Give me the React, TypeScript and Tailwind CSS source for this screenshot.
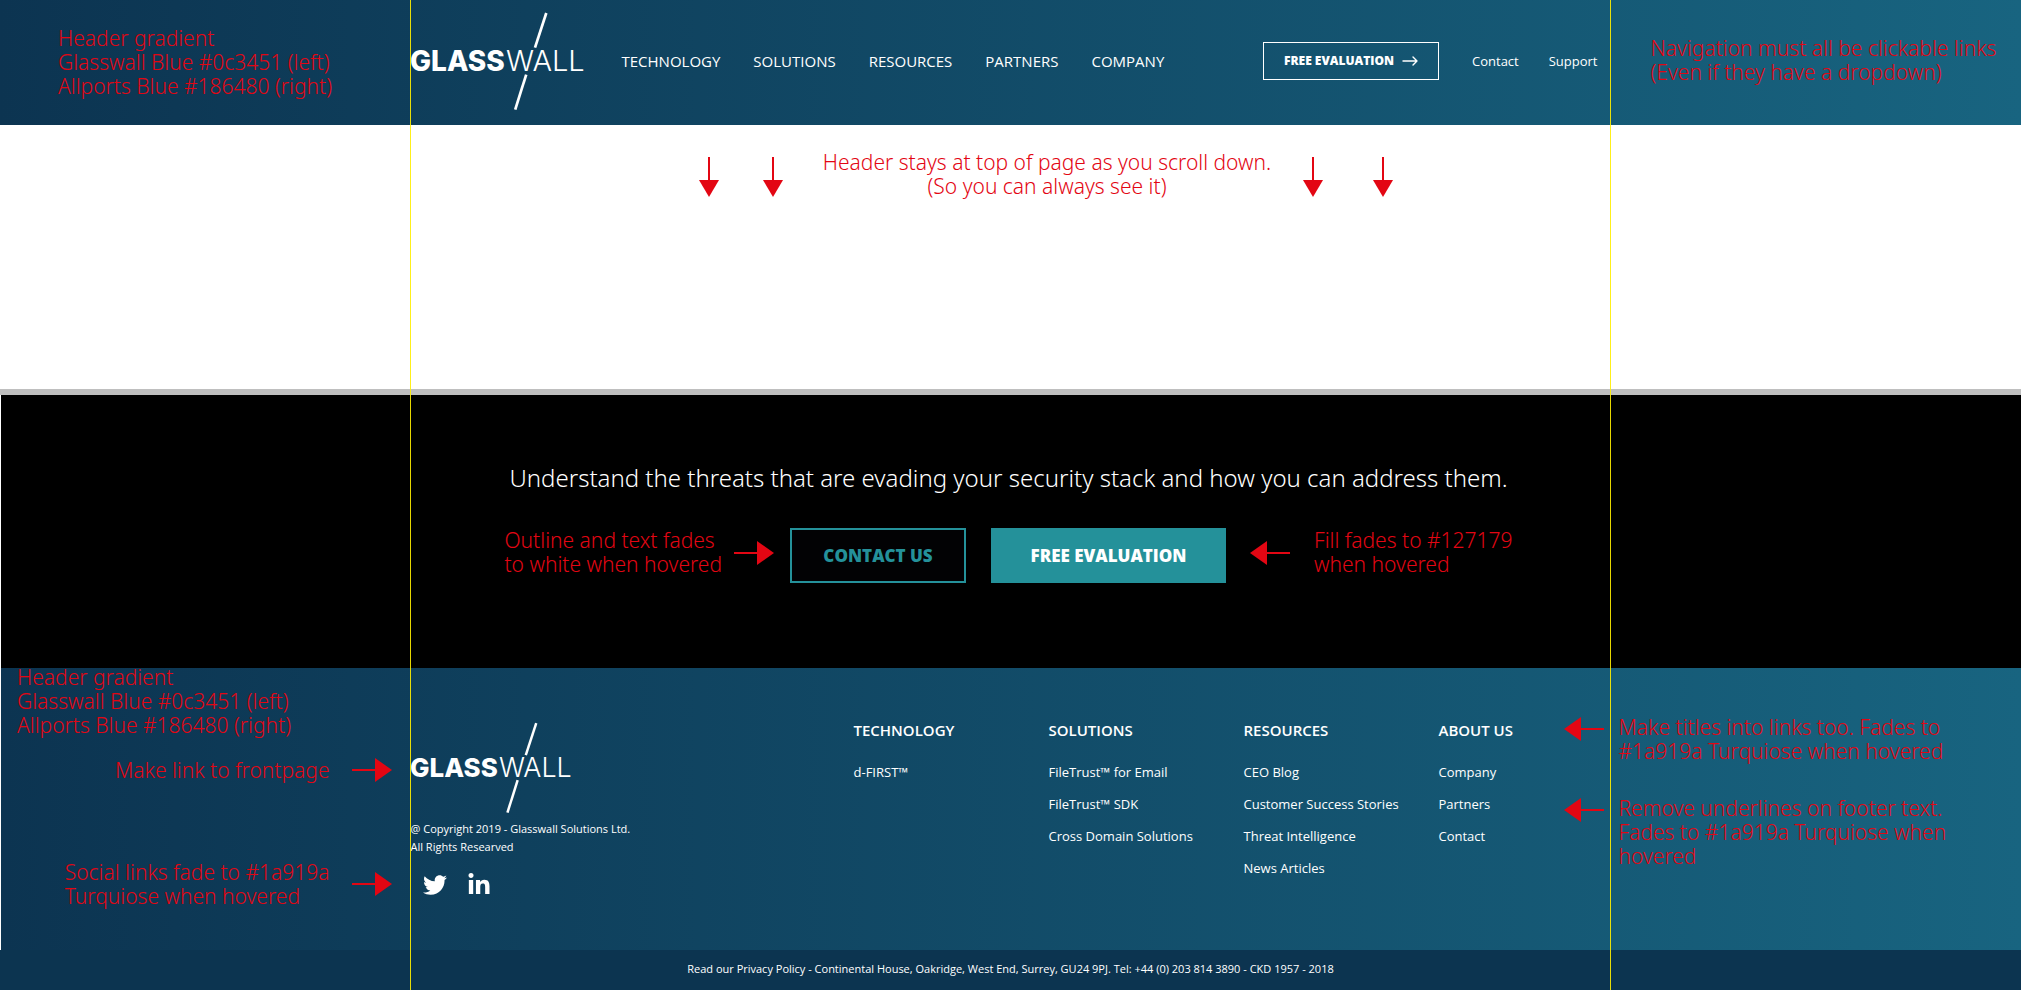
import React from "react";
import { FaLinkedinIn, FaTwitter } from "react-icons/fa";

const navLinks = ["TECHNOLOGY", "SOLUTIONS", "RESOURCES", "PARTNERS", "COMPANY"];

const footerColumns = [
  { title: "TECHNOLOGY", links: ["d-FIRST™"] },
  { title: "SOLUTIONS", links: ["FileTrust™ for Email", "FileTrust™ SDK", "Cross Domain Solutions"] },
  { title: "RESOURCES", links: ["CEO Blog", "Customer Success Stories", "Threat Intelligence", "News Articles"] },
  { title: "ABOUT US", links: ["Company", "Partners", "Contact"] },
];

function Logo({ className }: { className: string }) {
  return (
    <svg viewBox="0 0 175 99" className={className} role="img" aria-label="Glasswall">
      <g stroke="#fff" strokeWidth="2.7">
        <path d="M135.3 1 124 35.7" />
        <path d="M115.2 62.7 104.2 97.7" />
      </g>
      <g fill="#fff" fontFamily="Inter, sans-serif">
        <text x="-1" y="59" fontSize="28" fontWeight="800">GLASS</text>
        <text x="95" y="59" fontSize="29" fontWeight="300">WALL</text>
      </g>
    </svg>
  );
}

function ArrowRight() {
  return (
    <svg viewBox="0 0 40 24" className="h-6 w-10 shrink-0" aria-hidden="true">
      <path d="M0 12H24" stroke="#e30613" strokeWidth="2" />
      <path d="M23 0 40 12 23 24Z" fill="#e30613" />
    </svg>
  );
}

function ArrowLeft() {
  return (
    <svg viewBox="0 0 40 24" className="h-6 w-10 shrink-0" aria-hidden="true">
      <path d="M40 12H16" stroke="#e30613" strokeWidth="2" />
      <path d="M17 0 0 12 17 24Z" fill="#e30613" />
    </svg>
  );
}

function ArrowDown() {
  return (
    <svg viewBox="0 0 20 40" className="h-10 w-5 shrink-0" aria-hidden="true">
      <path d="M10 0V24" stroke="#e30613" strokeWidth="2" />
      <path d="M0 23H20L10 40Z" fill="#e30613" />
    </svg>
  );
}

function Note({ children, className = "" }: { children: React.ReactNode; className?: string }) {
  return (
    <p className={`font-['Noto_Sans',sans-serif] text-[21px] leading-6 font-light whitespace-nowrap text-[#e30613] ${className}`}>{children}</p>
  );
}

export default function App() {
  return (
    <div className="relative bg-white font-['Open_Sans',sans-serif] text-white">
      <header className="sticky top-0 grid grid-cols-[minmax(0,1fr)_minmax(0,1200px)_minmax(0,1fr)] items-center bg-linear-to-r from-[#0c3451] to-[#186480] pt-3 pb-[14px]">
        <Note className="pl-[58px]">
          Header gradient<br />
          Glasswall Blue #0c3451 (left)<br />
          Allports Blue #186480 (right)
        </Note>
        <div className="flex items-center">
          <a href="#" className="shrink-0">
            <Logo className="h-[99px] w-[175px]" />
          </a>
          <div className="flex flex-1 items-center pb-[2px]">
            <nav className="ml-9 flex gap-[33px] text-[15px] leading-5">
              {navLinks.map((label) => (
                <a key={label} href="#" className="hover:text-[#1a919a]">{label}</a>
              ))}
            </nav>
            <a href="#" className="ml-auto flex h-[38px] w-44 items-center justify-center gap-2 border border-white text-[12px] font-extrabold">
              FREE EVALUATION
              <svg viewBox="0 0 16 10" className="h-[10px] w-4" fill="none" stroke="#fff" strokeWidth="1.4" strokeLinecap="round" strokeLinejoin="round" aria-hidden="true">
                <path d="M1 5H15M11 1 15 5 11 9" />
              </svg>
            </a>
            <div className="ml-[33px] flex gap-[30px] pr-[13px] text-[13px] leading-5">
              <a href="#">Contact</a>
              <a href="#">Support</a>
            </div>
          </div>
        </div>
        <Note className="pb-1 pl-10">
          Navigation must all be clickable links<br />
          (Even if they have a dropdown)
        </Note>
      </header>

      <section className="flex h-[264px] items-start justify-center pt-[25px] pl-[71px]">
        <div className="mr-10 flex gap-11 pt-[7px]">
          <ArrowDown />
          <ArrowDown />
        </div>
        <Note className="text-center">
          Header stays at top of page as you scroll down.<br />
          (So you can always see it)
        </Note>
        <div className="ml-8 flex gap-[50px] pt-[7px]">
          <ArrowDown />
          <ArrowDown />
        </div>
      </section>

      <div className="h-[6px] bg-[#bfbfbf]" />

      <section className="bg-black pt-[67px] pr-1 pb-[85px] shadow-[inset_1px_0_0_#fff]">
        <h2 className="text-center font-['Noto_Sans',sans-serif] text-[24px] leading-8 font-light">
          Understand the threats that are evading your security stack and how you can address them.
        </h2>
        <div className="mt-[34px] flex items-start justify-center">
          <Note>
            Outline and text fades<br />
            to white when hovered
          </Note>
          <div className="mr-4 ml-3 pt-[13px]"><ArrowRight /></div>
          <button type="button" className="h-[55px] w-44 border-2 border-[#24919a] bg-[#020204] text-[17px] font-extrabold text-[#24919a] transition-colors hover:border-white hover:text-white">
            CONTACT US
          </button>
          <button type="button" className="ml-[25px] h-[55px] w-[235px] bg-[#24919a] text-[17px] font-extrabold transition-colors hover:bg-[#127179]">
            FREE EVALUATION
          </button>
          <div className="mx-6 pt-[13px]"><ArrowLeft /></div>
          <Note>
            Fill fades to #127179<br />
            when hovered
          </Note>
        </div>
      </section>

      <footer>
        <div className="bg-linear-to-r from-[#0c3451] to-[#186480] shadow-[inset_1px_0_0_#fff]">
          <div className="grid min-h-[282px] grid-cols-[minmax(0,1fr)_minmax(0,1200px)_minmax(0,1fr)]">
            <div className="-mt-[3px] pr-[19px]">
              <Note className="pl-[17px]">
                Header gradient<br />
                Glasswall Blue #0c3451 (left)<br />
                Allports Blue #186480 (right)
              </Note>
              <div className="mt-[21px] flex items-center justify-end gap-[22px]">
                <Note>Make link to frontpage</Note>
                <ArrowRight />
              </div>
              <div className="mt-[78px] flex items-center justify-end gap-[22px]">
                <Note>
                  Social links fade to #1a919a<br />
                  Turquiose when hovered
                </Note>
                <ArrowRight />
              </div>
            </div>

            <div className="grid grid-cols-[443px_195px_195px_195px_minmax(0,1fr)_auto]">
              <div className="pt-[54px]">
                <a href="#" className="block w-[162px]">
                  <Logo className="h-[92px] w-[162px]" />
                </a>
                <p className="mt-[6px] text-[11px] leading-[18px]">
                  @ Copyright 2019 - Glasswall Solutions Ltd.<br />
                  All Rights Researved
                </p>
                <div className="mt-[17px] flex gap-5 pl-3">
                  <a href="#" aria-label="Twitter" className="transition-colors hover:text-[#1a919a]"><FaTwitter size={24} /></a>
                  <a href="#" aria-label="LinkedIn" className="transition-colors hover:text-[#1a919a]"><FaLinkedinIn size={24} /></a>
                </div>
              </div>
              {footerColumns.map((column) => (
                <div key={column.title} className="pt-[52px]">
                  <h3 className="text-[15px] leading-5 font-semibold">
                    <a href="#" className="transition-colors hover:text-[#1a919a]">{column.title}</a>
                  </h3>
                  <ul className="mt-4 text-[13px] leading-8">
                    {column.links.map((link) => (
                      <li key={link}>
                        <a href="#" className="transition-colors hover:text-[#1a919a]">{link}</a>
                      </li>
                    ))}
                  </ul>
                </div>
              ))}
              <div className="flex flex-col gap-[57px] pt-[49px] pr-[7px]">
                <ArrowLeft />
                <ArrowLeft />
              </div>
            </div>

            <div className="flex flex-col gap-[33px] pt-[47px] pl-2">
              <Note>
                Make titles into links too. Fades to<br />
                #1a919a Turquiose when hovered
              </Note>
              <Note>
                Remove underlines on footer text.<br />
                Fades to #1a919a Turquiose when<br />
                hovered
              </Note>
            </div>
          </div>
        </div>
        <p className="bg-[#0c3450] pt-[10px] pb-3 text-center text-[11px] leading-[18px]">
          Read our <a href="#">Privacy Policy</a> - Continental House, Oakridge, West End, Surrey, GU24 9PJ. Tel: +44 (0) 203 814 3890 - CKD 1957 - 2018
        </p>
      </footer>

      <div className="pointer-events-none absolute inset-0 flex justify-center" aria-hidden="true">
        <div className="w-full max-w-[1201px] border-x border-[#ffee00]/90" />
      </div>
    </div>
  );
}
